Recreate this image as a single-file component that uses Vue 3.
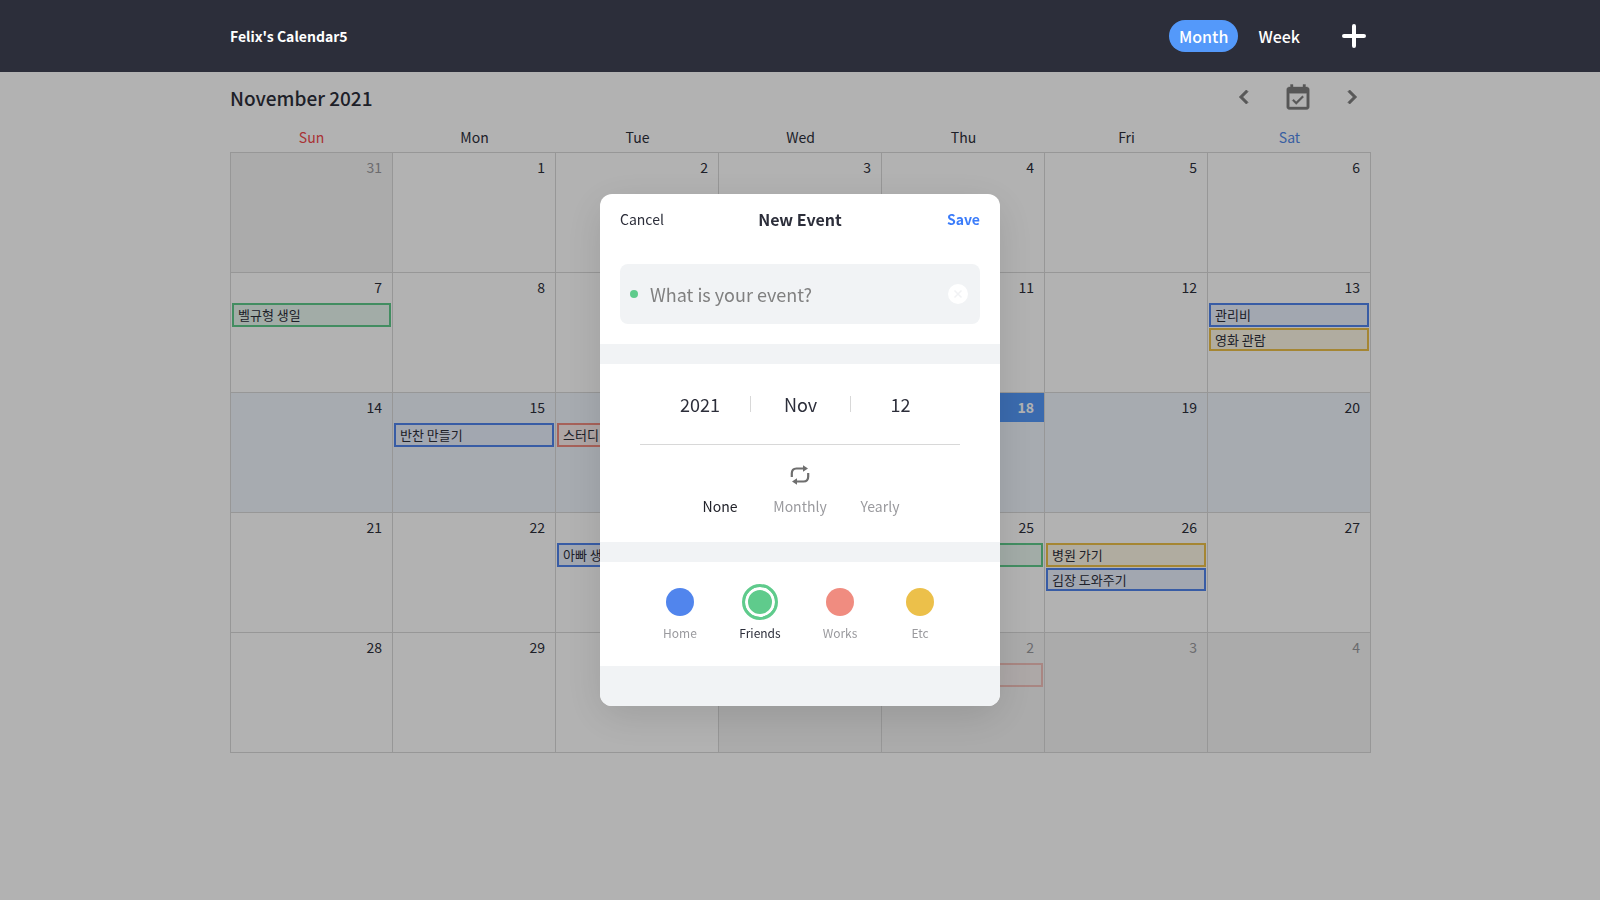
<script setup>
import { ref } from 'vue'

const weekdays = ['Sun', 'Mon', 'Tue', 'Wed', 'Thu', 'Fri', 'Sat']

const events = {
  '10-7': [{ title: '벨규형 생일', kind: 'friends' }],
  '10-13': [{ title: '관리비', kind: 'home' }, { title: '영화 관람', kind: 'etc' }],
  '10-15': [{ title: '반찬 만들기', kind: 'home' }],
  '10-16': [{ title: '스터디', kind: 'works' }],
  '10-23': [{ title: '아빠 생일', kind: 'home' }],
  '10-25': [{ title: '', kind: 'friends' }],
  '10-26': [{ title: '병원 가기', kind: 'etc' }, { title: '김장 도와주기', kind: 'home' }],
  '11-2': [{ title: '', kind: 'works' }],
}

const weeks = Array.from({ length: 5 }, (_, w) =>
  Array.from({ length: 7 }, (_, d) => {
    const date = new Date(2021, 9, 31 + w * 7 + d)
    const key = `${date.getMonth()}-${date.getDate()}`
    return {
      key,
      day: date.getDate(),
      outside: date.getMonth() !== 10,
      today: key === '10-18',
      events: events[key] || [],
    }
  })
)

const categories = [
  { id: 'home', label: 'Home' },
  { id: 'friends', label: 'Friends' },
  { id: 'works', label: 'Works' },
  { id: 'etc', label: 'Etc' },
]
const repeats = ['None', 'Monthly', 'Yearly']

const title = ref('')
const repeat = ref('None')
const category = ref('friends')
</script>

<template>
  <div class="page">
    <header class="topbar">
      <div class="wrap topbar-row">
        <h1 class="brand">Felix's Calendar5</h1>
        <nav class="views">
          <button type="button" class="view active">Month</button>
          <button type="button" class="view">Week</button>
          <button type="button" class="add" aria-label="Add event">
            <svg width="24" height="24" viewBox="0 0 24 24"><path d="M12 2v20M2 12h20" stroke="#fff" stroke-width="4" stroke-linecap="round" /></svg>
          </button>
        </nav>
      </div>
    </header>

    <main class="wrap">
      <div class="toolbar">
        <h2 class="month">November 2021</h2>
        <div class="pager">
          <button type="button" class="tool" aria-label="Previous month">
            <svg width="28" height="28" viewBox="0 0 24 24"><path d="M15.41 7.41 14 6l-6 6 6 6 1.41-1.41L10.83 12z" fill="#7d7d7d" stroke="#7d7d7d" stroke-width=".7" /></svg>
          </button>
          <button type="button" class="tool" aria-label="Go to today">
            <svg width="30" height="30" viewBox="0 -1 24 24"><path d="M16.53 11.06 15.47 10l-4.88 4.88-2.12-2.12-1.06 1.06L10.59 17l5.94-5.94zM19 3h-1V1h-2v2H8V1H6v2H5c-1.11 0-1.99.9-1.99 2L3 19c0 1.1.89 2 2 2h14c1.1 0 2-.9 2-2V5c0-1.1-.9-2-2-2zm0 16H5V8h14v11z" fill="#7d7d7d" stroke="#7d7d7d" stroke-width=".3" /></svg>
          </button>
          <button type="button" class="tool" aria-label="Next month">
            <svg width="28" height="28" viewBox="0 0 24 24"><path d="M10 6 8.59 7.41 13.17 12l-4.58 4.59L10 18l6-6z" fill="#7d7d7d" stroke="#7d7d7d" stroke-width=".7" /></svg>
          </button>
        </div>
      </div>

      <table class="calendar">
        <thead>
          <tr>
            <th v-for="name in weekdays" :key="name" scope="col" :class="name.toLowerCase()">{{ name }}</th>
          </tr>
        </thead>
        <tbody>
          <tr v-for="(week, i) in weeks" :key="i" :class="{ current: week.some((d) => d.today) }">
            <td v-for="cell in week" :key="cell.key" :class="{ outside: cell.outside, today: cell.today }">
              <div class="day">{{ cell.day }}</div>
              <div v-for="(event, n) in cell.events" :key="n" class="event" :class="event.kind">{{ event.title }}</div>
            </td>
          </tr>
        </tbody>
      </table>
    </main>

    <div class="overlay">
      <form class="dialog" role="dialog" aria-labelledby="dialog-title" @submit.prevent>
        <div class="dialog-head">
          <button type="button" class="cancel">Cancel</button>
          <h2 id="dialog-title" class="dialog-title">New Event</h2>
          <button type="submit" class="save">Save</button>
        </div>

        <div class="name-section">
          <div class="name-box">
            <span class="dot"></span>
            <input v-model="title" type="text" class="name-input" aria-label="Event name" placeholder="What is your event?" />
            <button type="button" class="clear" aria-label="Clear">
              <svg width="20" height="20" viewBox="0 0 20 20"><circle cx="10" cy="10" r="10" fill="#fff" /><path d="m6.500 6.500 7 7m0-7-7 7" stroke="#f1f2f4" stroke-width="1.500" /></svg>
            </button>
          </div>
        </div>

        <div class="when-section">
          <div class="date">
            <button type="button" class="date-part">2021</button>
            <button type="button" class="date-part">Nov</button>
            <button type="button" class="date-part">12</button>
          </div>
          <div class="repeat">
            <svg class="repeat-icon" width="20" height="20" viewBox="0 0 20 20" fill="none" stroke="#6e6e6e" stroke-width="2.200">
              <path d="M1.800 12V8.500Q1.800 3.500 6.500 3.500H14" />
              <path d="M18.200 8v3.500q0 5-4.700 5H6" />
              <path d="M13 .3 18 3.500l-5 3.200zM7 13.300l-5 3.200 5 3.200z" fill="#6e6e6e" stroke="none" />
            </svg>
            <div class="repeat-options" role="radiogroup" aria-label="Repeat">
              <label v-for="name in repeats" :key="name" class="repeat-option" :class="{ chosen: repeat === name }">
                <input v-model="repeat" type="radio" name="repeat" class="hidden-radio" :value="name" />{{ name }}
              </label>
            </div>
          </div>
        </div>

        <div class="category-section" role="radiogroup" aria-label="Category">
          <label v-for="item in categories" :key="item.id" class="category" :class="{ chosen: category === item.id }">
            <span class="swatch-slot"><input v-model="category" type="radio" name="category" class="swatch" :class="item.id" :value="item.id" /></span>
            {{ item.label }}
          </label>
        </div>
        <div class="dialog-foot"></div>
      </form>
    </div>
  </div>
</template>

<style>
body {
  margin: 0;
  background: #fff;
}
</style>

<style scoped>
.page {
  min-height: 100vh;
  color: #2c2e3a;
  font-family: "Noto Sans CJK KR", "Noto Sans", sans-serif;
  font-size: 14px;
}
.page * {
  box-sizing: border-box;
}
button {
  margin: 0;
  padding: 0;
  border: 0;
  background: none;
  color: inherit;
  font: inherit;
  cursor: pointer;
}
svg {
  display: block;
}
h1,
h2 {
  margin: 0;
}
.wrap {
  max-width: 1140px;
  margin: 0 auto;
}
.topbar {
  position: relative;
  z-index: 2;
  background: #2c2e3a;
  color: #fff;
}
.topbar-row {
  display: flex;
  align-items: center;
  justify-content: space-between;
  height: 72px;
}
.brand {
  font-size: 14px;
  font-weight: 700;
}
.views {
  display: flex;
  align-items: center;
}
.view {
  height: 32px;
  padding: 0 10px;
  border-radius: 16px;
  font-size: 16px;
  font-weight: 500;
  line-height: 30px;
}
.view + .view {
  margin-left: 10px;
}
.active {
  background: #5499fa;
}
.add {
  margin: 0 4px 0 32px;
}
.toolbar {
  display: flex;
  align-items: center;
  justify-content: space-between;
  height: 50px;
}
.month {
  font-size: 19px;
  font-weight: 500;
}
.pager {
  display: flex;
  gap: 18px;
}
.tool {
  display: flex;
  align-items: center;
  justify-content: center;
  width: 36px;
  height: 40px;
}
.calendar {
  width: calc(100% + 1px);
  table-layout: fixed;
  border-collapse: separate;
  border-spacing: 0;
}
.calendar thead tr {
  height: 31px;
}
th {
  padding: 0;
  border-bottom: 1px solid #d8d8d8;
  font-size: 14px;
  font-weight: 400;
  line-height: 30px;
}
.sun {
  color: #f2494c;
}
.sat {
  color: #5288e8;
}
td {
  height: 120px;
  padding: 0;
  border-right: 1px solid #d8d8d8;
  border-bottom: 1px solid #d8d8d8;
  vertical-align: top;
}
td:first-child {
  border-left: 1px solid #d8d8d8;
}
.day {
  height: 29px;
  margin-bottom: 1px;
  padding-right: 10px;
  line-height: 29px;
  text-align: right;
}
.outside {
  background: #f5f5f5;
}
.outside .day {
  color: #9a9a9e;
}
.outside .event {
  opacity: .5;
}
.current td {
  background: #eff5fc;
}
.today .day {
  background: #5499fa;
  color: #fff;
  font-weight: 700;
}
.event {
  height: 24px;
  margin: 0 1px 1px;
  padding: 0 4px;
  border: 2px solid;
  overflow: hidden;
  font-size: 13px;
  line-height: 20px;
  white-space: nowrap;
}
.event + .event {
  height: 23px;
  line-height: 19px;
}
.event.home {
  border-color: #5185ed;
  background: #e8effd;
}
.event.friends {
  border-color: #5fcb8c;
  background: #e9f7f0;
}
.event.works {
  border-color: #f08c80;
  background: #fbeeed;
}
.event.etc {
  border-color: #ecc04a;
  background: #fcf7e6;
}
.overlay {
  position: fixed;
  inset: 0;
  z-index: 1;
  display: flex;
  align-items: center;
  justify-content: center;
  background: rgba(0, 0, 0, .3);
}
.dialog {
  width: 400px;
  max-width: 100%;
  overflow: hidden;
  border-radius: 12px;
  background: #fff;
  box-shadow: 0 10px 40px rgba(0, 0, 0, .12);
}
.dialog-head {
  display: grid;
  grid-template-columns: 1fr auto 1fr;
  align-items: center;
  height: 50px;
  padding: 0 20px;
}
.cancel {
  justify-self: start;
}
.dialog-title {
  font-size: 16px;
  font-weight: 700;
}
.save {
  justify-self: end;
  color: #3b7cfa;
  font-weight: 700;
}
.name-section {
  padding: 20px;
}
.name-box {
  display: flex;
  align-items: center;
  height: 60px;
  padding: 0 12px 0 10px;
  border-radius: 8px;
  background: #f1f3f5;
}
.dot {
  width: 8px;
  height: 8px;
  border-radius: 50%;
  background: #5fcb8c;
}
.name-input {
  flex: 1;
  min-width: 0;
  height: 60px;
  margin: 0 10px 0 12px;
  padding: 0;
  border: 0;
  outline: 0;
  background: none;
  color: #2c2e3a;
  font: inherit;
  font-size: 18px;
}
.name-input::placeholder {
  color: #808080;
}
.when-section {
  padding: 0 40px;
  border: solid #f1f3f5;
  border-width: 20px 0;
}
.date {
  display: flex;
  justify-content: center;
  padding: 32px 0;
  border-bottom: 1px solid #d8d8d8;
}
.date-part {
  width: 100px;
  height: 16px;
  font-size: 18px;
  line-height: 16px;
}
.date-part + .date-part {
  border-left: 1px solid #d8d8d8;
}
.repeat {
  display: flex;
  flex-direction: column;
  align-items: center;
  padding: 20px 0 24px;
}
.repeat-options {
  display: flex;
  margin-top: 9px;
}
.repeat-option {
  position: relative;
  width: 80px;
  color: #9a9a9e;
  line-height: 24px;
  text-align: center;
}
.repeat-option.chosen {
  color: #22232b;
}
.hidden-radio {
  position: absolute;
  inset: 0;
  margin: 0;
  opacity: 0;
}
.category-section {
  display: flex;
  justify-content: center;
  padding: 22px 0 23px;
}
.category {
  display: flex;
  flex-direction: column;
  align-items: center;
  gap: 3px;
  width: 80px;
  color: #9a9a9e;
  font-size: 12px;
  line-height: 20px;
}
.category.chosen {
  color: #2c2e3a;
}
.swatch-slot {
  display: flex;
  align-items: center;
  justify-content: center;
  height: 36px;
}
.swatch {
  width: 28px;
  height: 28px;
  margin: 0;
  border-radius: 50%;
  appearance: none;
}
.swatch.home {
  background: #5185ed;
}
.swatch.friends {
  background: #5fcb8c;
}
.swatch.works {
  background: #f08c80;
}
.swatch.etc {
  background: #ecc04a;
}
.swatch:checked {
  width: 36px;
  height: 36px;
  border: 3px solid #5fcb8c;
  box-shadow: inset 0 0 0 3px #fff;
}
.dialog-foot {
  height: 40px;
  background: #f1f3f5;
}
</style>
